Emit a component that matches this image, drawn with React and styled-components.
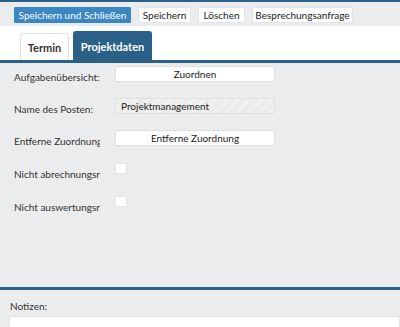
import React from 'react'
import styled, { createGlobalStyle } from 'styled-components'

const Global = createGlobalStyle`
    html, body { margin: 0; padding: 0; background: #ebecee; }
    body { font-family: Lato, "Open Sans", sans-serif; font-size: 10px; color: #333; }
`

const Page = styled.div`
    width: 400px;
    height: 327px;
    overflow: hidden;
    display: flex;
    flex-direction: column;
    background: #ebecee;
    border-top: 2px solid #2b6189;
    box-sizing: border-box;
`

const Toolbar = styled.div`
    display: flex;
    align-items: flex-start;
    gap: 7px;
    height: 24px;
    box-sizing: border-box;
    padding: 5px 0 0 14px;
    box-shadow: 0 1px 1px rgba(0,0,0,0.08);
`

const ToolButton = styled.button`
    font: inherit;
    font-size: 10px;
    width: ${p => p.w}px;
    height: 16px;
    padding: 0;
    white-space: nowrap;
    border: 1px solid ${p => p.primary ? '#3a86c2' : '#e3e3e3'};
    background: ${p => p.primary ? '#3b87c4' : '#fff'};
    color: ${p => p.primary ? '#fff' : '#222'};
    border-radius: 1px;
`

const TabStrip = styled.div`
    display: flex;
    align-items: flex-end;
    gap: 4px;
    height: 34px;
    padding-left: 20px;
    background: #fff;
    border-bottom: 3px solid #2b6189;
`

const Tab = styled.div`
    display: flex;
    align-items: center;
    justify-content: center;
    width: ${p => p.w}px;
    height: ${p => p.active ? 29 : 27}px;
    box-sizing: border-box;
    padding-top: 1px;
    font-size: 11px;
    font-weight: 700;
    color: ${p => p.active ? '#fff' : '#333'};
    background: ${p => p.active ? '#2b6189' : '#fff'};
    border: 1px solid ${p => p.active ? '#2b6189' : '#e2e2e2'};
    border-bottom: none;
    border-radius: 3px 3px 0 0;
`

const Form = styled.div`
    flex: 1;
    display: flex;
    flex-direction: column;
    padding: 3px 0 0 14px;
`

const Row = styled.div`
    display: flex;
    align-items: flex-start;
    height: ${p => p.h || 32}px;
`

const Label = styled.div`
    width: 86px;
    margin-right: 15px;
    white-space: nowrap;
    overflow: hidden;
    font-size: 10px;
    line-height: 13px;
    color: #333;
    padding-top: ${p => p.pt || 5}px;
`

const FieldButton = styled.div`
    width: 160px;
    height: 16px;
    box-sizing: border-box;
    border: 1px solid #e0e0e0;
    background: #fff;
    display: flex;
    align-items: center;
    justify-content: center;
    font-size: 10px;
    color: #222;
`

const ReadOnly = styled(FieldButton)`
    justify-content: flex-start;
    padding-left: 5px;
    background: repeating-linear-gradient(135deg, #ececec 0 6px, #f3f3f3 6px 8px);
`

const Check = styled.div`
    width: 12px;
    height: 11px;
    box-sizing: border-box;
    background: #fff;
    border: 1px solid #e6e6e6;
`

const Divider = styled.div`
    height: 3px;
    background: #2b6189;
    margin-top: auto;
`

const Notes = styled.div`
    padding: 10px 0 0 10px;
    height: 37px;
    box-sizing: border-box;
    font-size: 10px;
    color: #333;
`

const NotesBox = styled.div`
    margin: 4px 0 0 -1px;
    height: 20px;
    background: #fff;
    border: 1px solid #e2e2e2;
`

export default function App() {
    return (
        <Page>
            <Global />
            <Toolbar>
                <ToolButton primary w={117}>Speichern und Schließen</ToolButton>
                <ToolButton w={53}>Speichern</ToolButton>
                <ToolButton w={47}>Löschen</ToolButton>
                <ToolButton w={101}>Besprechungsanfrage</ToolButton>
            </Toolbar>
            <TabStrip>
                <Tab w={49}>Termin</Tab>
                <Tab active w={79}>Projektdaten</Tab>
            </TabStrip>
            <Form>
                <Row h={32}>
                    <Label>Aufgabenübersicht:</Label>
                    <FieldButton>Zuordnen</FieldButton>
                </Row>
                <Row h={32}>
                    <Label>Name des Posten:</Label>
                    <ReadOnly>Projektmanagement</ReadOnly>
                </Row>
                <Row h={33}>
                    <Label>Entferne Zuordnung:</Label>
                    <FieldButton>Entferne Zuordnung</FieldButton>
                </Row>
                <Row h={33}>
                    <Label>Nicht abrechnungsrelevant</Label>
                    <Check />
                </Row>
                <Row h={33}>
                    <Label>Nicht auswertungsrelevant</Label>
                    <Check />
                </Row>
            </Form>
            <Divider />
            <Notes>
                Notizen:
                <NotesBox />
            </Notes>
        </Page>
    )
}
